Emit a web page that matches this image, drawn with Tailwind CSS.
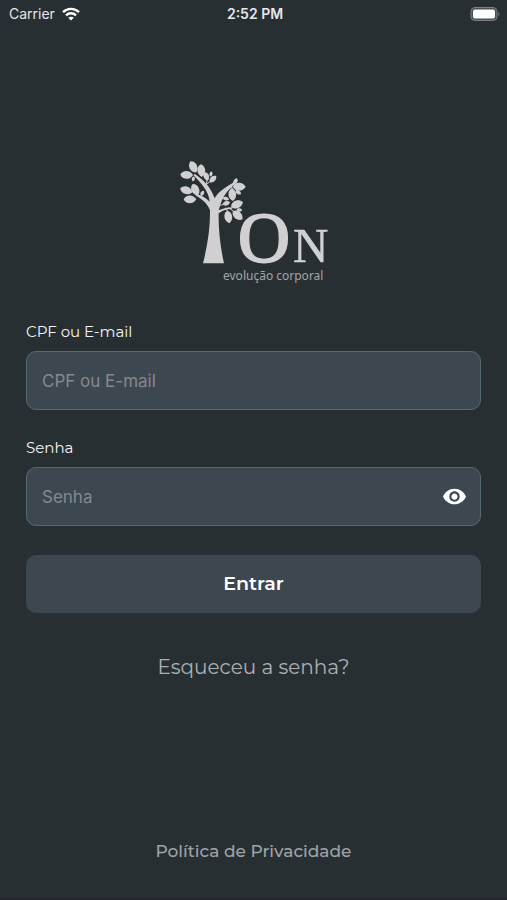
<!DOCTYPE html>
<html lang="pt-BR">
<head>
  <meta charset="UTF-8">
  <meta name="viewport" content="width=device-width, initial-scale=1.0">
  <title>ON Evolução Corporal</title>
  <script src="https://cdn.jsdelivr.net/npm/@tailwindcss/browser@4"></script>
</head>
<body class="bg-[#282f33] text-white font-['Montserrat','Inter',sans-serif]">
  <div class="flex min-h-screen flex-col border-b-3 border-[#2a2630]">
    <!-- Status bar -->
    <header class="grid grid-cols-3 items-center pt-1 pr-[6px] pl-[9px] text-sm text-gray-200 font-['Inter',sans-serif]">
      <div class="flex items-center gap-[7px]">
        <span>Carrier</span>
        <svg class="h-3.5 w-[18px]" viewBox="0 0 18 14" fill="none" stroke="white" stroke-width="2.4">
          <path d="M1 5.2C5.500 .7 12.500 .7 17 5.200"/>
          <path d="M4 8.400C6.800 5.600 11.200 5.600 14 8.400"/>
          <path d="M9 13.600L6.200 10.700C7.800 9.300 10.200 9.300 11.800 10.700Z" fill="white" stroke="none"/>
        </svg>
      </div>
      <span class="text-center font-semibold">2:52 PM</span>
      <svg class="h-3.5 w-[31px] justify-self-end" viewBox="0 0 31 14">
        <rect x="1" y=".5" width="26" height="13" rx="4" fill="#4b5256" stroke="#7b8184"/>
        <rect x="3" y="2.500" width="22" height="9" rx="2" fill="white"/>
        <path d="M28.500 4.500Q30.500 7 28.500 9.500Z" fill="#7b8184"/>
      </svg>
    </header>

    <main class="flex flex-1 flex-col px-[26px]">
      <!-- Logo -->
      <svg class="mx-auto mt-[134px] h-32 w-[152px]" viewBox="178 158 152 128" fill="#d0d0d2" role="img" aria-label="ON evolução corporal">
        <defs>
          <path id="leaf" d="M-19 0C-13 -15 10 -16 19 0C10 16 -13 15 -19 0Z"/>
        </defs>
        <g transform="translate(170 150) scale(.3333)">
          <path d="M99 340C113 285 121 230 120 181C114 165 100 149 76 136L78 131C96 136 109 144 119 155C117 132 105 110 70 75L75 72C105 94 122 112 134 145C143 128 160 115 193 96L197 101C173 120 159 138 152 162L146 181C157 177 169 172 187 172L187 176C167 177 157 182 146 190C145 235 150 286 162 340Z"/>
          <path d="M108 105L112 88M110 103L123 92M91 144L99 127M155 147L170 143M151 166L168 161M188 103L194 91M167 173L173 185M174 173L190 183M185 109L187 120" stroke="#d0d0d2" stroke-width="3"/>
          <use href="#leaf" transform="translate(70 51) rotate(62)"/>
          <use href="#leaf" transform="translate(50 75) rotate(2)"/>
          <use href="#leaf" transform="translate(94 62) rotate(85)"/>
          <use href="#leaf" transform="translate(70 87) rotate(100) scale(.4)"/>
          <use href="#leaf" transform="translate(109 79) rotate(70) scale(.7)"/>
          <use href="#leaf" transform="translate(129 87) rotate(-45) scale(.7)"/>
          <use href="#leaf" transform="translate(123 72) rotate(-75) scale(.4)"/>
          <use href="#leaf" transform="translate(49 121) rotate(18)"/>
          <use href="#leaf" transform="translate(76 119) rotate(65)"/>
          <use href="#leaf" transform="translate(60 148)"/>
          <use href="#leaf" transform="translate(97 130) rotate(-60) scale(.45)"/>
          <use href="#leaf" transform="translate(197 93) rotate(-65) scale(.5)"/>
          <use href="#leaf" transform="translate(208 110)"/>
          <use href="#leaf" transform="translate(187 134) rotate(85)"/>
          <use href="#leaf" transform="translate(205 127) rotate(35) scale(.5)"/>
          <use href="#leaf" transform="translate(168 146) rotate(10) scale(.5)"/>
          <use href="#leaf" transform="translate(169 160) rotate(-15) scale(.6)"/>
          <use href="#leaf" transform="translate(201 163) rotate(-22)"/>
          <use href="#leaf" transform="translate(208 180) scale(.45)"/>
          <use href="#leaf" transform="translate(175 201) rotate(80)"/>
          <use href="#leaf" transform="translate(203 196) rotate(42)"/>
        </g>
        <g class="font-['Liberation_Serif',serif]" stroke="#d0d0d2">
          <text x="238" y="262" font-size="72" stroke-width="2">O</text>
          <text x="293" y="262" font-size="49" stroke-width=".5">N</text>
        </g>
        <text class="font-['Noto_Sans',sans-serif]" x="223" y="280" font-size="12" fill="#a3a5a8">evolução corporal</text>
      </svg>

      <!-- Login form -->
      <form class="mt-9 flex flex-col">
        <label for="login" class="text-[15px] leading-5 text-gray-100">CPF ou E-mail</label>
        <input id="login" type="text" placeholder="CPF ou E-mail" class="mt-[9px] h-[59px] w-full rounded-[10px] border border-[#536a74] bg-[#3c4750] px-[15px] text-[17px] placeholder:text-[#84898e] font-['Inter',sans-serif]">

        <label for="senha" class="mt-7 text-[15px] leading-5 text-gray-100">Senha</label>
        <div class="relative mt-[9px]">
          <input id="senha" type="password" placeholder="Senha" class="block h-[59px] w-full rounded-[10px] border border-[#536a74] bg-[#3c4750] pr-14 pl-[15px] text-[17px] placeholder:text-[#84898e] font-['Inter',sans-serif]">
          <button type="button" aria-label="Mostrar senha" class="absolute inset-y-0 right-[14px]">
            <svg class="size-[25px]" viewBox="0 0 24 24" fill="white">
              <path d="M12 4.500C7 4.500 2.730 7.610 1 12c1.730 4.390 6 7.500 11 7.500s9.270-3.110 11-7.500c-1.730-4.390-6-7.500-11-7.500zM12 17c-2.760 0-5-2.240-5-5s2.240-5 5-5 5 2.240 5 5-2.240 5-5 5zm0-8c-1.660 0-3 1.340-3 3s1.340 3 3 3 3-1.340 3-3-1.340-3-3-3z"/>
            </svg>
          </button>
        </div>

        <button type="submit" class="mt-[29px] h-[58px] w-full rounded-[10px] bg-[#3c4750] text-[19px] font-semibold">Entrar</button>
      </form>

      <a href="#" class="mx-auto mt-10 text-xl leading-7 text-[#adb0b3]">Esqueceu a senha?</a>
      <a href="#" class="mx-auto mt-auto mb-[34px] text-[17px] leading-6 font-medium text-[#a0a3a6]">Política de Privacidade</a>
    </main>
  </div>
</body>
</html>
